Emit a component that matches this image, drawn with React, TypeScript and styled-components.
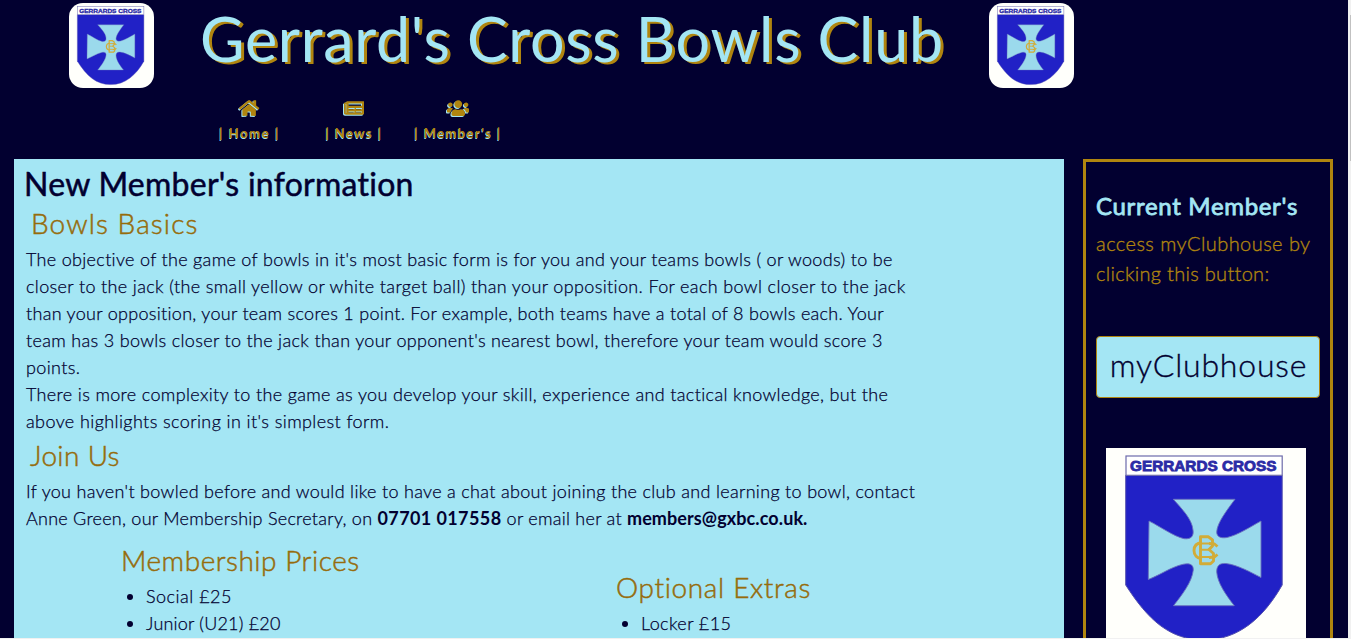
import React from "react";
import styled, { createGlobalStyle } from "styled-components";
import { FaHome, FaNewspaper, FaUsers } from "react-icons/fa";

const navy = "#020030";
const sky = "#a4e6f4";
const gold = "#b0850f";

const Global = createGlobalStyle`
  * { box-sizing: border-box; }
  html, body { margin: 0; height: 639px; overflow: hidden; background: ${navy}; }
  body { font-family: Lato, "Noto Sans", sans-serif; font-weight: 300; color: ${navy}; }
  h1, h2, h3, h4, p, ul { margin: 0; padding: 0; font-weight: 300; }
`;

const Window = styled.div`
  display: grid;
  grid-template: 638px 1px / 1348px 3px;
  width: 1351px;
  height: 639px;
  overflow: hidden;
`;
const Page = styled.div`
  height: 638px;
  overflow: hidden;
  background: ${navy};
`;
const ScrollTrack = styled.div`
  background: #f1f1f1;
  padding: 15px 0 0 2px;
`;
const ScrollThumb = styled.div`
  height: 146px;
  background: #c1c1c1;
`;
const BottomEdge = styled.div`
  grid-column: 1 / 3;
  background: #f1f1f1;
`;

const Header = styled.header`
  display: flex;
  align-items: flex-start;
  height: 95px;
  padding: 3px 0 0 69px;
`;
const HeaderLogo = styled.div`
  width: 85px;
  height: 85px;
  border-radius: 14px;
  overflow: hidden;
  svg { display: block; width: 85px; height: 85px; }
`;
const Title = styled.h1`
  width: 835px;
  padding-left: 46px;
  font-size: 61px;
  line-height: 72px;
  font-weight: 400;
  letter-spacing: 0.72px;
  white-space: nowrap;
  color: ${sky};
  text-shadow: 3px 2px ${gold};
`;

const Nav = styled.nav`
  display: flex;
  height: 64px;
  padding-left: 197px;
`;
const NavItem = styled.a<{ $width: number; $spacing: number; $icon: number }>`
  display: flex;
  flex-direction: column;
  align-items: center;
  width: ${(p) => p.$width}px;
  padding-top: 4px;
  font-size: 13px;
  line-height: 16px;
  font-weight: 700;
  letter-spacing: ${(p) => p.$spacing}px;
  white-space: nowrap;
  color: ${gold};
  text-shadow: -0.5px 0.5px 0.5px ${sky};
  svg {
    flex: none;
    width: ${(p) => p.$icon}px;
    height: 18px;
    margin-bottom: 8px;
    filter: drop-shadow(-0.5px 1px 0 ${sky});
  }
`;

const Columns = styled.div`
  display: flex;
  gap: 19px;
  padding-left: 14px;
`;
const Article = styled.main`
  width: 1050px;
  height: 479px;
  background: ${sky};
  overflow: hidden;
`;
const PageHeading = styled.h2`
  padding: 5px 0 0 10px;
  font-size: 32px;
  line-height: 40px;
  font-weight: 400;
  letter-spacing: 0.26px;
  -webkit-text-stroke: 0.5px ${navy};
`;
const SubHeading = styled.h3<{ $spacing: number; $indent?: number }>`
  padding-left: ${(p) => p.$indent ?? 0}px;
  font-size: 28px;
  line-height: 34px;
  letter-spacing: ${(p) => p.$spacing}px;
  color: #966c0c;
  -webkit-text-stroke: 0.5px #966c0c;
`;
const BasicsHeading = styled(SubHeading)`
  padding-top: 2px;
`;
const Copy = styled.p`
  padding: 6px 0 3px 12px;
  font-size: 18px;
  line-height: 27px;
  -webkit-text-stroke: 0.25px ${navy};
`;
const Line = styled.span<{ $spacing: number }>`
  display: block;
  white-space: pre;
  letter-spacing: ${(p) => p.$spacing}px;
`;
const Contact = styled.b<{ $spacing: number }>`
  font-weight: 700;
  letter-spacing: ${(p) => p.$spacing}px;
  -webkit-text-stroke: 0;
`;
const Prices = styled.div`
  display: flex;
  padding: 8px 0 0 107px;
`;
const PriceGroup = styled.section<{ $width: number; $drop: number }>`
  width: ${(p) => p.$width}px;
  padding-top: ${(p) => p.$drop}px;
`;
const PriceList = styled.ul`
  padding: 6px 0 0 25px;
  font-size: 18px;
  line-height: 27px;
  -webkit-text-stroke: 0.25px ${navy};
`;
const Price = styled.li<{ $spacing: number }>`
  letter-spacing: ${(p) => p.$spacing}px;
`;

const Aside = styled.aside`
  width: 250px;
  height: 520px;
  border: 3px solid ${gold};
  padding: 28px 10px 0;
  color: ${gold};
`;
const AsideHeading = styled.h3`
  font-size: 24px;
  line-height: 32px;
  font-weight: 400;
  letter-spacing: 0.68px;
  color: ${sky};
  -webkit-text-stroke: 0.8px ${sky};
`;
const AsideCopy = styled.p`
  padding-top: 6px;
  font-size: 20px;
  line-height: 30px;
  -webkit-text-stroke: 0.35px ${gold};
`;
const ClubhouseButton = styled.button`
  display: block;
  width: 224px;
  height: 62px;
  margin: 48px 0 50px;
  padding: 0 0 4px 1px;
  border: 1px solid ${gold};
  border-radius: 4px;
  background: ${sky};
  color: ${navy};
  font: 300 32px/1 Lato, sans-serif;
  letter-spacing: 0.8px;
  -webkit-text-stroke: 0.35px ${navy};
`;
const AsideLogo = styled.div`
  padding-left: 10px;
  svg { display: block; width: 200px; height: 200px; }
`;

const Crest = () => (
  <svg viewBox="0 0 200 200" aria-label="Gerrards Cross crest">
    <rect width="200" height="200" fill="#fffffb" />
    <path
      d="M19.7 27.3V137C42 172 64 192 98 192C133 192 158 169 176.2 137V27.3Z"
      fill="#2121c6"
      stroke="#5552ae"
      strokeWidth="1"
    />
    <rect x="20" y="8" width="156.2" height="19.3" fill="#fff" stroke="#6d6bab" strokeWidth="1.2" />
    <text
      x="24"
      y="22.7"
      textLength="146.5"
      lengthAdjust="spacingAndGlyphs"
      fontFamily="Liberation Sans, sans-serif"
      fontSize="14"
      fontWeight="700"
      fill="#2b2ba6"
      stroke="#2b2ba6"
      strokeWidth="0.8"
    >
      GERRARDS CROSS
    </text>
    <path
      d="M67.3 51.3H129C121 62 111 75 110.7 84C110.7 89 115 90.5 121 89.5C132 87 144 79 155 73V129.5C144 124 132 117 120 115.5C113 115 110.7 118 110.7 124C111.5 135 120 147 128.3 157.7H67.5C76 147 86 134 87.3 122C87.5 116 83 115 77 116.3C65 119 54 127 42.3 131.5L43 73C55 79 67 88 78 90.7C85 91.5 88 88 87 82C86 71 76 61 67.3 51.3Z"
      fill="#9bdaec"
      stroke="#6a72bd"
      strokeWidth="0.9"
    />
    <g fill="none" stroke="#d2ac38" strokeWidth="2.9" strokeLinejoin="round">
      <path d="M94.5 88.8H102.5L106.5 92V98L103 101.5L107.5 105.5V113L104.5 115.8H94.5Z" />
      <path d="M94.5 95.5H104M94.5 101.7H104M94.5 109H106.5" strokeWidth="2" />
      <path d="M111.5 98.5L108.5 96L103 95.5M96 94.5C91 95 88 98 88 102.5C88 107 91 110.5 96 111M103 109.5L108.5 109L111.5 106.5" />
    </g>
  </svg>
);

const rules: [number, string][] = [
  [0.316, "The objective of the game of bowls in it's most basic form is for you and your teams bowls ( or woods) to be"],
  [0.358, "closer to the jack (the small yellow or white target ball) than your opposition. For each bowl closer to the jack"],
  [0.295, "than your opposition, your team scores 1 point. For example, both teams have a total of 8 bowls each. Your"],
  [0.325, "team has 3 bowls closer to the jack than your opponent's nearest bowl, therefore your team would score 3"],
  [0.35, "points."],
  [0.35, "There is more complexity to the game as you develop your skill, experience and tactical knowledge, but the"],
  [0.4, "above highlights scoring in it's simplest form."],
];

export default function App() {
  return (
    <Window>
      <Global />
      <Page>
        <Header>
          <HeaderLogo><Crest /></HeaderLogo>
          <Title>Gerrard's Cross Bowls Club</Title>
          <HeaderLogo><Crest /></HeaderLogo>
        </Header>
        <Nav>
          <NavItem $width={105} $spacing={1.6} $icon={20.25}><FaHome />| Home |</NavItem>
          <NavItem $width={104} $spacing={1.4} $icon={20.25}><FaNewspaper />| News |</NavItem>
          <NavItem $width={104} $spacing={1.4} $icon={22.5}><FaUsers />| Member's |</NavItem>
        </Nav>
        <Columns>
          <Article>
            <PageHeading>New Member's information</PageHeading>
            <BasicsHeading $spacing={1.1} $indent={17}>Bowls Basics</BasicsHeading>
            <Copy>
              {rules.map(([spacing, text]) => (
                <Line key={text} $spacing={spacing}>{text}</Line>
              ))}
            </Copy>
            <SubHeading $spacing={0.35} $indent={16}>Join Us</SubHeading>
            <Copy>
              <Line $spacing={0.316}>If you haven't bowled before and would like to have a chat about joining the club and learning to bowl, contact</Line>
              <Line $spacing={0.26}>
                {"Anne Green, our Membership Secretary, on "}
                <Contact $spacing={0.4}>07701 017558</Contact>
                {" or email her at "}
                <Contact $spacing={0.1}>members@gxbc.co.uk.</Contact>
              </Line>
            </Copy>
            <Prices>
              <PriceGroup $width={495} $drop={0}>
                <SubHeading $spacing={0.52}>Membership Prices</SubHeading>
                <PriceList>
                  <Price $spacing={0.5}>Social £25</Price>
                  <Price $spacing={0.2}>Junior (U21) £20</Price>
                </PriceList>
              </PriceGroup>
              <PriceGroup $width={300} $drop={27}>
                <SubHeading $spacing={0.65}>Optional Extras</SubHeading>
                <PriceList>
                  <Price $spacing={0.4}>Locker £15</Price>
                </PriceList>
              </PriceGroup>
            </Prices>
          </Article>
          <Aside>
            <AsideHeading>Current Member's</AsideHeading>
            <AsideCopy>
              <Line $spacing={0.45}>access myClubhouse by</Line>
              <Line $spacing={0.3}>clicking this button:</Line>
            </AsideCopy>
            <ClubhouseButton>myClubhouse</ClubhouseButton>
            <AsideLogo><Crest /></AsideLogo>
          </Aside>
        </Columns>
      </Page>
      <ScrollTrack><ScrollThumb /></ScrollTrack>
      <BottomEdge />
    </Window>
  );
}
